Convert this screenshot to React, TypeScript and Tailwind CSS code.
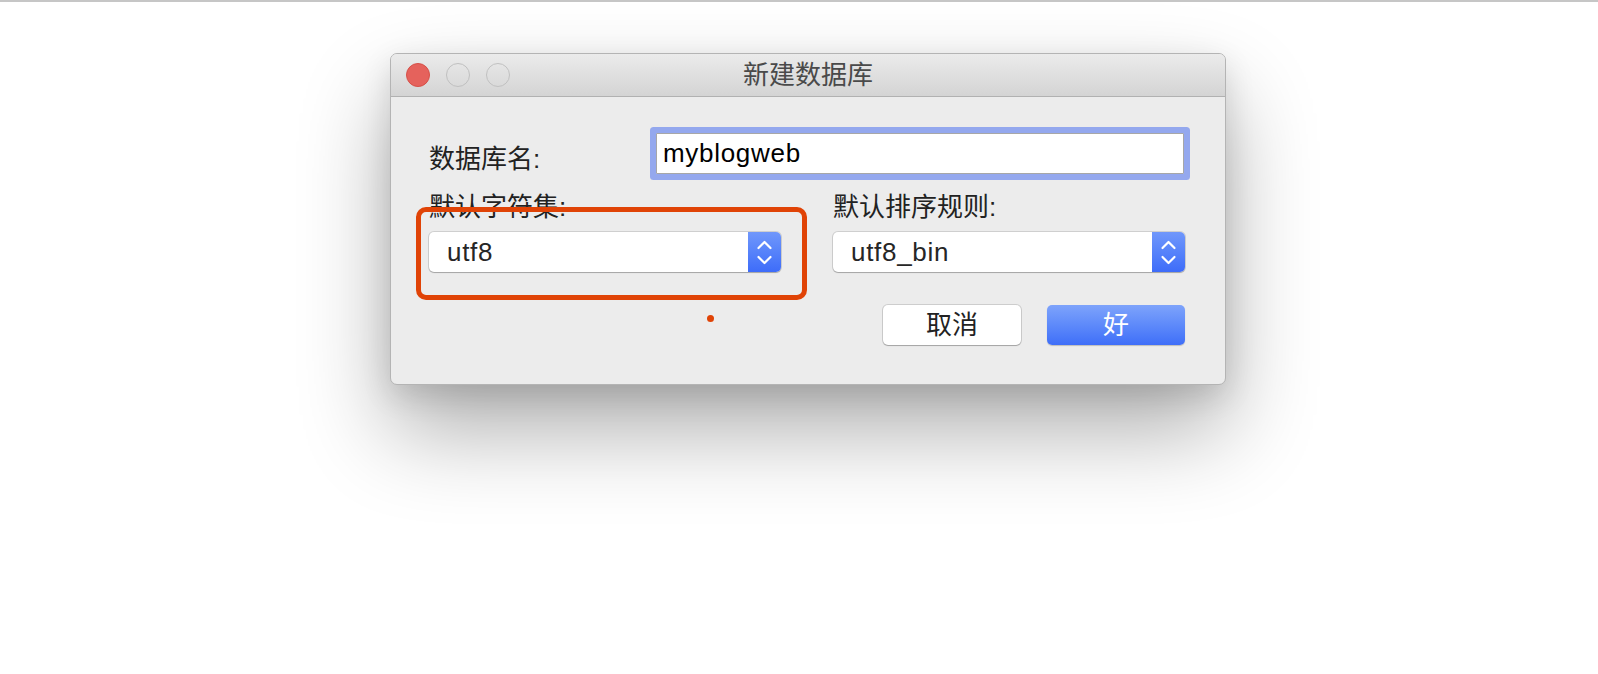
const font = { fontFamily: '"Liberation Sans", "Noto Sans CJK SC", sans-serif' };

function Stepper() {
  return (
    <div className="flex h-full w-[33px] shrink-0 items-center justify-center rounded-r-[5px] bg-gradient-to-b from-[#7097fb] to-[#3e6cf9]">
      <svg width="33" height="40" viewBox="0 0 33 40" fill="none" stroke="white" strokeWidth="2.2" strokeLinecap="round" strokeLinejoin="round">
        <path d="M10.5 16 L16.5 10 L22.5 16" />
        <path d="M10.5 25 L16.5 31 L22.5 25" />
      </svg>
    </div>
  );
}

function Select({ value }: { value: string }) {
  return (
    <div className="mt-[10px] flex h-[40px] items-stretch rounded-[5px] bg-white shadow-[0_0_0_1px_rgba(0,0,0,0.12),0_1px_1px_rgba(0,0,0,0.2)]">
      <div className="flex flex-1 items-center pl-[18px] text-[26px] tracking-[0.7px] text-[#262626]">{value}</div>
      <Stepper />
    </div>
  );
}

export default function App() {
  return (
    <div className="min-h-[674px] border-t-2 border-[#c6c6c6] bg-white" style={font}>
      <div className="ml-[390px] mt-[51px] w-[836px] overflow-hidden rounded-[7px] border border-[#b4b4b4] bg-[#ececec] shadow-[0_45px_90px_rgba(0,0,0,0.32),0_10px_30px_rgba(0,0,0,0.12)]">
        <div className="grid h-[43px] grid-cols-[1fr_auto_1fr] items-center border-b border-[#b1b1b1] bg-gradient-to-b from-[#ebebeb] to-[#d4d4d4]">
          <div className="flex items-center gap-[16px] pl-[15px]">
            <span className="h-[24px] w-[24px] rounded-full border border-[#d65048] bg-[#e5625c]" />
            <span className="h-[24px] w-[24px] rounded-full border border-[#c0c0c0]" />
            <span className="h-[24px] w-[24px] rounded-full border border-[#c0c0c0]" />
          </div>
          <div className="text-[26px] leading-[30px] text-[#4a4a4a]">新建数据库</div>
          <div />
        </div>

        <div className="relative pb-[39px] pl-[38px] pr-[40px] pt-[36px]">
          <div className="flex items-center">
            <div className="mt-[11px] w-[227px] text-[26px] leading-[30px] text-[#222]">数据库名:</div>
            <div className="flex h-[41px] w-[528px] items-center rounded-[1px] border border-[#a7a7a7] bg-white pl-[6px] text-[26px] tracking-[0.7px] text-black shadow-[0_0_0_6px_#94a8ee]">
              myblogweb
            </div>
          </div>

          <div className="mt-[18px] grid grid-cols-2 gap-x-[52px]">
            <div>
              <div className="text-[26px] leading-[30px] text-[#222]">默认字符集:</div>
              <Select value="utf8" />
            </div>
            <div>
              <div className="text-[26px] leading-[30px] text-[#222]">默认排序规则:</div>
              <Select value="utf8_bin" />
            </div>
          </div>

          <div className="mt-[33px] flex justify-end gap-[26px]">
            <button className="h-[40px] w-[138px] rounded-[5px] bg-white text-[26px] text-[#222] shadow-[0_0_0_1px_rgba(0,0,0,0.13),0_1px_1px_rgba(0,0,0,0.2)]">
              取消
            </button>
            <button className="h-[40px] w-[138px] rounded-[5px] bg-gradient-to-b from-[#7ea3fb] to-[#3f6ef8] text-[26px] text-white shadow-[0_1px_1px_rgba(0,0,0,0.2)]">
              好
            </button>
          </div>

          {/* annotation overlay */}
          <div className="absolute left-[25px] top-[110px] h-[93px] w-[391px] rounded-[10px] border-[5px] border-[#e04306]" />
          <div className="absolute left-[316px] top-[218px] h-[7px] w-[7px] rounded-full bg-[#e04306]" />
        </div>
      </div>
    </div>
  );
}
